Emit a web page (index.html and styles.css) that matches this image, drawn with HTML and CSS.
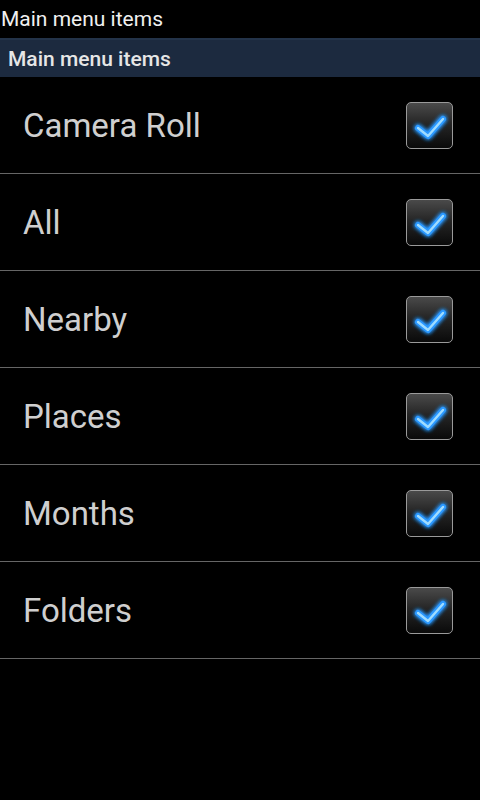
FILE: index.html
```html
<!DOCTYPE html>
<html lang="en">
<head>
  <meta charset="UTF-8" />
  <meta name="viewport" content="width=device-width, initial-scale=1" />
  <title>Main menu items</title>
  <link rel="stylesheet" href="styles.css">
</head>
<body>
  <div class="title-bar">Main menu items</div>
  <div class="section-header">Main menu items</div>

  <ul class="menu-list">
    <li class="menu-item"><span class="label">Camera Roll</span><span class="check"></span></li>
    <li class="menu-item"><span class="label">All</span><span class="check"></span></li>
    <li class="menu-item"><span class="label">Nearby</span><span class="check"></span></li>
    <li class="menu-item"><span class="label">Places</span><span class="check"></span></li>
    <li class="menu-item"><span class="label">Months</span><span class="check"></span></li>
    <li class="menu-item"><span class="label">Folders</span><span class="check"></span></li>
  </ul>

  <svg width="0" height="0" class="defs">
    <defs>
      <filter id="glow" x="-50%" y="-50%" width="200%" height="200%">
        <feGaussianBlur stdDeviation="2.2" result="blur" />
        <feMerge>
          <feMergeNode in="blur" />
          <feMergeNode in="blur" />
          <feMergeNode in="SourceGraphic" />
        </feMerge>
      </filter>
    </defs>
  </svg>

  <script>
    // fill each checkbox with the same glowing tick
    const tick = '<svg viewBox="0 0 45 45" width="45" height="45">' +
      '<path d="M11 25 L21 33 L36 16" fill="none" stroke="#2a98ff" stroke-width="6" stroke-linecap="round" stroke-linejoin="round" filter="url(#glow)"/>' +
      '<path d="M11 25 L21 33 L36 16" fill="none" stroke="#9fdcff" stroke-width="2.4" stroke-linecap="round" stroke-linejoin="round"/>' +
      '</svg>';
    document.querySelectorAll('.check').forEach(el => { el.innerHTML = tick; });
  </script>
</body>
</html>
```

FILE: styles.css
```css
body {
  margin: 0;
  background: #000;
  color: #ccc;
  font-family: Roboto, "Noto Sans", sans-serif;
  width: 480px;
  height: 800px;
  overflow: hidden;
}
.defs {
  position: absolute;
}
.title-bar {
  height: 38px;
  line-height: 38px;
  padding-left: 1px;
  font-size: 21px;
  color: #f0f0f0;
}
.section-header {
  height: 37px;
  line-height: 38px;
  padding-left: 8px;
  font-size: 21px;
  font-weight: 500;
  color: #e6e6e6;
  background: #1c2a3f;
  border-top: 2px solid #233349;
}
.menu-list {
  list-style: none;
  margin: 0;
  padding: 0;
}
.menu-item {
  height: 96px;
  display: flex;
  align-items: center;
  justify-content: space-between;
  padding: 0 27px 0 23px;
  border-bottom: 1px solid #666;
}
.label {
  font-size: 33px;
  color: #cfcfcf;
}
.check {
  width: 45px;
  height: 45px;
  border: 1px solid #9a9a9a;
  border-radius: 5px;
  background: linear-gradient(#4a4a4a 0%, #262626 45%, #0a0a0a 100%);
  display: flex;
  align-items: center;
  justify-content: center;
  overflow: hidden;
}
.check svg {
  display: block;
  flex: none;
}
```
